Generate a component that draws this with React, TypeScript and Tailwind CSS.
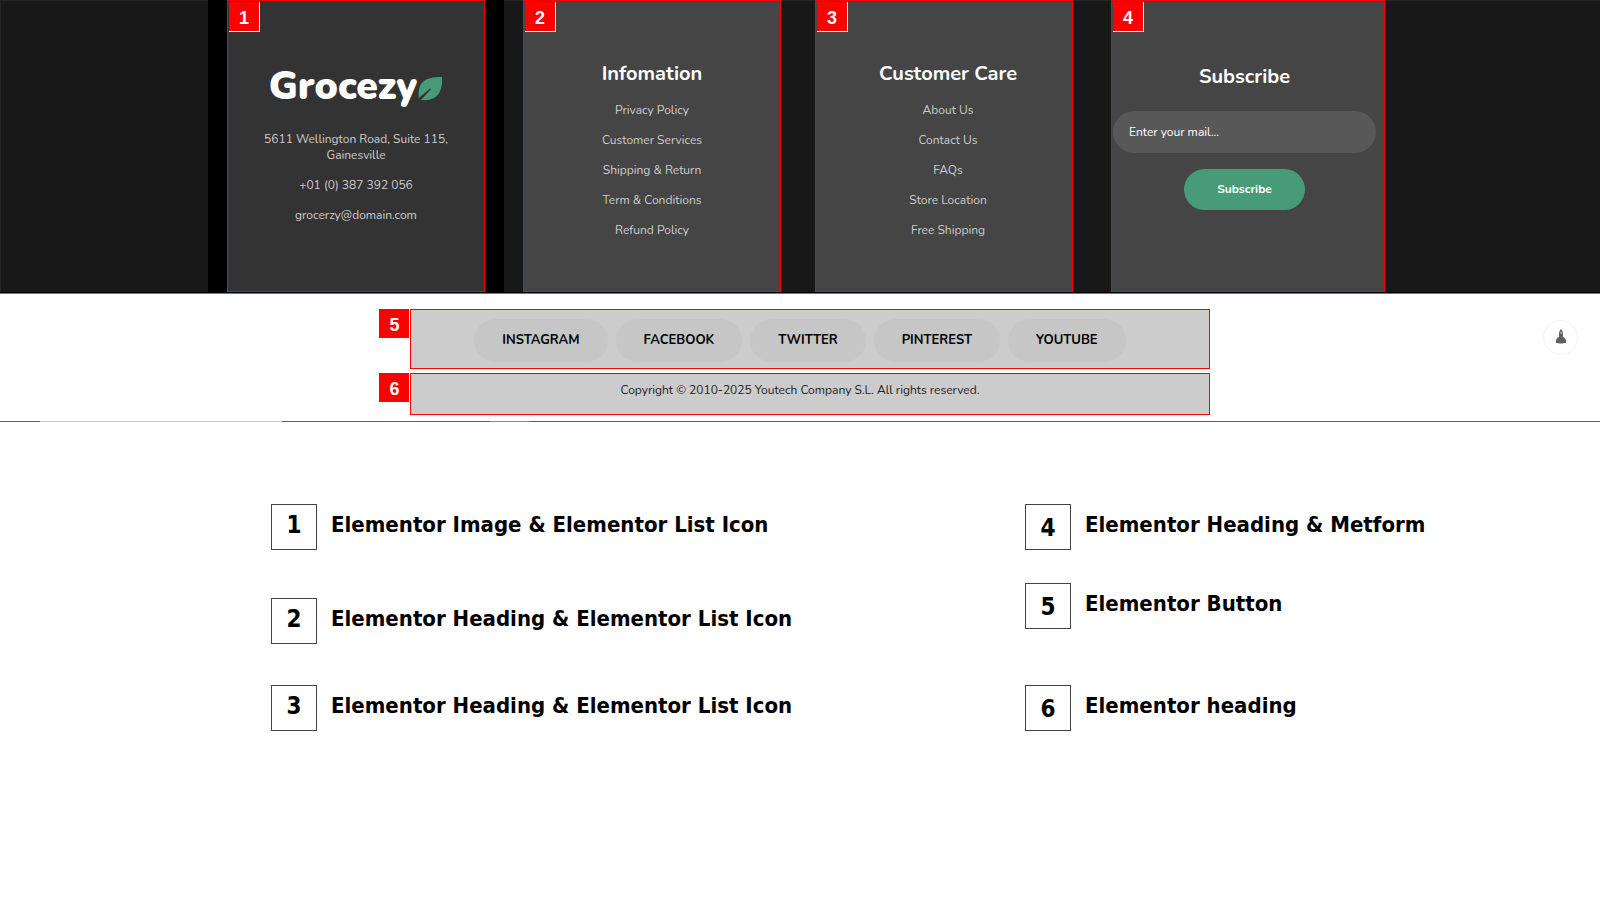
import type { ReactNode } from "react";

const information = ["Privacy Policy", "Customer Services", "Shipping & Return", "Term & Conditions", "Refund Policy"];
const customerCare = ["About Us", "Contact Us", "FAQs", "Store Location", "Free Shipping"];
const socials = ["Instagram", "Facebook", "Twitter", "Pinterest", "Youtube"];

const legendLeft = [
  { number: 1, label: "Elementor Image & Elementor List Icon", spacing: "mb-12" },
  { number: 2, label: "Elementor Heading & Elementor List Icon", spacing: "mb-[41px]" },
  { number: 3, label: "Elementor Heading & Elementor List Icon", spacing: "" },
];

const legendRight = [
  { number: 4, label: "Elementor Heading & Metform", spacing: "mb-[33px]" },
  { number: 5, label: "Elementor Button", spacing: "mb-14" },
  { number: 6, label: "Elementor heading", spacing: "" },
];

function Column({ number, className, children }: { number: number; className: string; children: ReactNode }) {
  return (
    <section className={`relative h-[292px] border border-[#f00] text-center ${className}`}>
      <span className="absolute left-px top-px flex h-[30px] w-[31px] items-center justify-center border-b border-r border-white bg-[#f00] pt-0.5 font-['Liberation_Sans',sans-serif] text-lg font-bold text-white">
        {number}
      </span>
      {children}
    </section>
  );
}

function LinkList({ title, links }: { title: string; links: string[] }) {
  return (
    <>
      <h2 className="text-xl leading-6 font-bold text-white">{title}</h2>
      <ul className="mt-4 flex flex-col gap-3.5">
        {links.map((link) => (
          <li key={link} className="h-4">
            <a href="#" className="block text-xs leading-4 text-[#ccc]">{link}</a>
          </li>
        ))}
      </ul>
    </>
  );
}

function Logo() {
  return (
    <a href="#" aria-label="Grocezy" className="flex items-center justify-center gap-px">
      <span className="text-[39px] leading-[48px] font-black text-white">Grocezy</span>
      <svg width="25" height="25" viewBox="0 0 25 25" className="mt-0.5">
        <path d="M24 1C14 .5 5 3 2 10C.5 14 .5 18 .8 22L12 12.500L13 13.300L3 24C14 25 20 21 22.500 14C24 10 24.500 5 24 1Z" fill="#489b78" />
      </svg>
    </a>
  );
}

function Legend({ items, numberClass }: { items: typeof legendLeft; numberClass: string }) {
  return (
    <ul>
      {items.map((item) => (
        <li key={item.number} className={`flex items-start gap-3.5 ${item.spacing}`}>
          <span className={`flex size-[46px] shrink-0 items-center justify-center border border-[#444] text-2xl ${numberClass}`}>
            {item.number}
          </span>
          <span className="text-[22px] leading-[42px] whitespace-nowrap">{item.label}</span>
        </li>
      ))}
    </ul>
  );
}

export default function App() {
  return (
    <div className="min-h-screen bg-white font-['Nunito','Open_Sans',sans-serif]">
      {/* Footer columns */}
      <footer className="grid grid-cols-[208fr_296fr_19fr_258fr_34fr_258fr_38fr_274fr_215fr] border-b border-[#777] bg-[#181818]">
        <div className="border-l border-t border-[#242424]"></div>
        <div className="bg-black px-[19px]">
          <Column number={1} className="bg-[#333] px-7 pt-[62px]">
            <Logo />
            <address className="mt-5 flex flex-col gap-3.5 text-xs leading-4 text-[#ccc] not-italic">
              <p>
                5611 Wellington Road, Suite 115,
                <br />
                Gainesville
              </p>
              <p>+01 (0) 387 392 056</p>
              <p>grocerzy@domain.com</p>
            </address>
          </Column>
        </div>
        <div className="border-t border-[#242424]"></div>
        <Column number={2} className="bg-[#454545] pt-[61px]">
          <LinkList title="Infomation" links={information} />
        </Column>
        <div className="border-t border-[#242424]"></div>
        <Column number={3} className="bg-[#454545] pt-[61px] pl-2">
          <LinkList title="Customer Care" links={customerCare} />
        </Column>
        <div className="border-t border-[#242424]"></div>
        <Column number={4} className="bg-[#454545] pt-16 pr-2 pl-px">
          <h2 className="text-xl leading-6 font-bold text-white">Subscribe</h2>
          <form className="mt-[22px]" onSubmit={(event) => event.preventDefault()}>
            <input
              type="email"
              aria-label="Email"
              placeholder="Enter your mail..."
              className="block h-[42px] w-full rounded-full bg-[#585858] px-4 text-xs text-white outline-none placeholder:text-white"
            />
            <button type="submit" className="mt-4 h-[41px] w-[121px] rounded-full bg-[#489b78] pb-px text-xs font-bold text-white">
              Subscribe
            </button>
          </form>
        </Column>
        <div className="border-t border-[#242424]"></div>
        <div className="col-span-full h-px bg-black"></div>
      </footer>

      {/* Social buttons and copyright */}
      <div className="grid grid-cols-[379fr_31px_800fr_390fr] gap-y-1 pt-[15px] pb-1.5">
        <span className="col-start-2 flex h-[29px] w-[30px] items-center justify-center bg-[#f00] pt-0.5 pl-px font-['Liberation_Sans',sans-serif] text-lg font-bold text-white">5</span>
        <nav className="flex h-[60px] items-center justify-center gap-2 border border-[#f00] bg-[#ccc] pt-0.5 pr-5">
          {socials.map((social) => (
            <a key={social} href="#" className="flex h-[43px] items-center rounded-full bg-[#c6c6c6] px-7 pt-px text-[13px] font-bold text-black uppercase">
              {social}
            </a>
          ))}
        </nav>
        <div className="flex items-center justify-end pr-[22px] pb-1">
          <button type="button" aria-label="Back to top" className="flex size-[35px] items-center justify-center rounded-full border border-[#f3f3f3]">
            <svg width="12" height="16" viewBox="0 0 12 16">
              <path d="M6 0C7.300 1 8 3 8 6V8.500L9 8L11 11V14H9L8 14.500H4L3 14H1V11L3 8L4 8.500V6C4 3 4.700 1 6 0Z" fill="#606060" />
              <path d="M6 2.500V5" stroke="#ccc" strokeWidth="1" />
            </svg>
          </button>
        </div>

        <span className="col-start-2 flex h-[29px] w-[30px] items-center justify-center bg-[#f00] pt-0.5 pl-px font-['Liberation_Sans',sans-serif] text-lg font-bold text-white">6</span>
        <p className="h-[42px] border border-[#f00] bg-[#ccc] pt-2 pr-5 text-center text-xs leading-4 text-[#222]">
          Copyright © 2010-2025 Youtech Company S.L. All rights reserved.
        </p>
      </div>
      <div className="grid h-px grid-cols-[40fr_242fr_208fr_40fr_1070fr] bg-[#5d5e62]">
        <div className="col-start-2 bg-[#ccc]"></div>
        <div className="col-start-4 bg-[#888]"></div>
      </div>

      {/* Legend */}
      <div className="grid grid-cols-[271fr_754fr_575fr] pt-[82px] pb-20 font-['Tahoma','DejaVu_Sans_Condensed','DejaVu_Sans',sans-serif] font-bold text-black">
        <div className="col-start-2">
          <Legend items={legendLeft} numberClass="pb-1" />
        </div>
        <Legend items={legendRight} numberClass="pt-px" />
      </div>
    </div>
  );
}
